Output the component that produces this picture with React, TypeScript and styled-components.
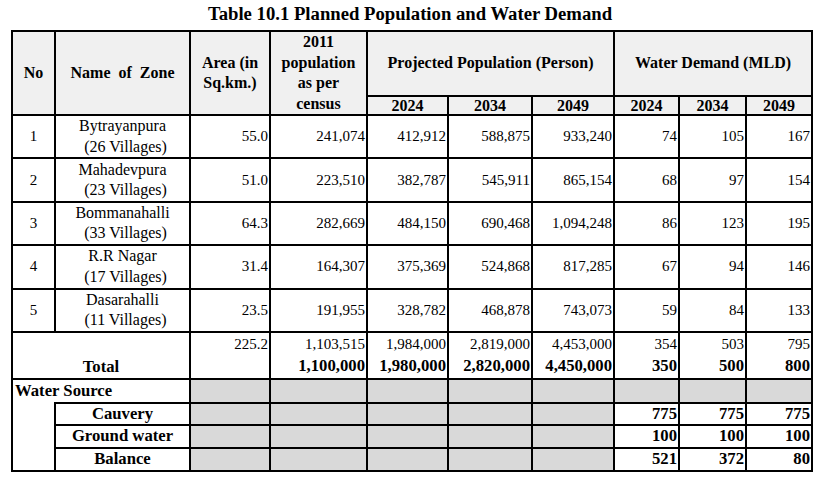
import styled, { createGlobalStyle } from 'styled-components';

const GlobalStyle = createGlobalStyle`
  body {
    margin: 0;
    background: #fff;
    color: #000;
    font-family: 'Liberation Serif', 'Times New Roman', serif;
  }
`;

type Zone = {
  no: number;
  name: string;
  villages: number;
  area: string;
  census: string;
  pop: string[];
  demand: string[];
};

const zones: Zone[] = [
  { no: 1, name: 'Bytrayanpura', villages: 26, area: '55.0', census: '241,074', pop: ['412,912', '588,875', '933,240'], demand: ['74', '105', '167'] },
  { no: 2, name: 'Mahadevpura', villages: 23, area: '51.0', census: '223,510', pop: ['382,787', '545,911', '865,154'], demand: ['68', '97', '154'] },
  { no: 3, name: 'Bommanahalli', villages: 33, area: '64.3', census: '282,669', pop: ['484,150', '690,468', '1,094,248'], demand: ['86', '123', '195'] },
  { no: 4, name: 'R.R Nagar', villages: 17, area: '31.4', census: '164,307', pop: ['375,369', '524,868', '817,285'], demand: ['67', '94', '146'] },
  { no: 5, name: 'Dasarahalli', villages: 11, area: '23.5', census: '191,955', pop: ['328,782', '468,878', '743,073'], demand: ['59', '84', '133'] },
];

const totals = [
  { raw: '1,103,515', round: '1,100,000' },
  { raw: '1,984,000', round: '1,980,000' },
  { raw: '2,819,000', round: '2,820,000' },
  { raw: '4,453,000', round: '4,450,000' },
  { raw: '354', round: '350' },
  { raw: '503', round: '500' },
  { raw: '795', round: '800' },
];

const sources = [
  { name: 'Cauvery', values: ['775', '775', '775'] },
  { name: 'Ground water', values: ['100', '100', '100'] },
  { name: 'Balance', values: ['521', '372', '80'] },
];

const colWidths = [43, 135, 80, 97, 81, 84, 82, 65, 67, 66];

function App() {
  return (
    <Page>
      <GlobalStyle />
      <Title>Table 10.1 Planned Population and Water Demand</Title>
      <Table>
        <colgroup>
          {colWidths.map((w, i) => (
            <col key={i} style={{ width: w }} />
          ))}
        </colgroup>
        <thead>
          <HeadRow $h={64}>
            <Th rowSpan={2}>No</Th>
            <Th rowSpan={2} $spaced>
              Name of Zone
            </Th>
            <Th rowSpan={2}>
              Area (in
              <br />
              Sq.km.)
            </Th>
            <Th rowSpan={2}>
              2011
              <br />
              population
              <br />
              as per
              <br />
              census
            </Th>
            <Th colSpan={3}>Projected Population (Person)</Th>
            <Th colSpan={3}>Water Demand (MLD)</Th>
          </HeadRow>
          <HeadRow $h={19}>
            {['2024', '2034', '2049', '2024', '2034', '2049'].map((y, i) => (
              <YearTh key={i}>{y}</YearTh>
            ))}
          </HeadRow>
        </thead>
        <tbody>
          {zones.map((z) => (
            <DataRow key={z.no}>
              <CenterCell>{z.no}</CenterCell>
              <NameCell>
                <span>{z.name}</span>
                <Villages>({z.villages} Villages)</Villages>
              </NameCell>
              <NumCell>{z.area}</NumCell>
              <NumCell>{z.census}</NumCell>
              {z.pop.map((p, i) => (
                <NumCell key={`p${i}`}>{p}</NumCell>
              ))}
              {z.demand.map((d, i) => (
                <NumCell key={`d${i}`}>{d}</NumCell>
              ))}
            </DataRow>
          ))}
          <TotalRow>
            <TotalLabel colSpan={2}>Total</TotalLabel>
            <TotalCell>
              <span>225.2</span>
              <b>&nbsp;</b>
            </TotalCell>
            {totals.map((t, i) => (
              <TotalCell key={i}>
                <span>{t.raw}</span>
                <b>{t.round}</b>
              </TotalCell>
            ))}
          </TotalRow>
          <SourceRow $h={24}>
            <SourceHead colSpan={2}>Water Source</SourceHead>
            {Array.from({ length: 8 }).map((_, i) => (
              <GreyCell key={i} />
            ))}
          </SourceRow>
          {sources.map((s, r) => (
            <SourceRow key={s.name} $h={r === 0 ? 22 : 23}>
              {r === 0 && <IndentCell rowSpan={3} />}
              <SourceName>{s.name}</SourceName>
              {Array.from({ length: 5 }).map((_, i) => (
                <GreyCell key={i} />
              ))}
              {s.values.map((v, i) => (
                <BoldNumCell key={i}>{v}</BoldNumCell>
              ))}
            </SourceRow>
          ))}
        </tbody>
      </Table>
    </Page>
  );
}

const Page = styled.div`
  width: 814px;
  height: 490px;
  padding-top: 3px;
  box-sizing: border-box;
`;

const Title = styled.h1`
  margin: 0 0 5px 6px;
  font-size: 18.7px;
  line-height: 22px;
  font-weight: 700;
  text-align: center;
`;

const Table = styled.table`
  margin-left: 11px;
  width: 800px;
  table-layout: fixed;
  border-collapse: collapse;
  font-size: 15px;

  td,
  th {
    border: 2px solid #000;
    padding: 0 1px;
    overflow: hidden;
    white-space: nowrap;
  }
`;

const HeadRow = styled.tr<{ $h: number }>`
  height: ${(p) => p.$h}px;
  background: #f0f0f0;
`;

const Th = styled.th<{ $spaced?: boolean }>`
  font-size: 16px;
  font-weight: 700;
  line-height: 20.5px;
  text-align: center;
  vertical-align: middle;
  word-spacing: ${(p) => (p.$spaced ? '4px' : 'normal')};
`;

const YearTh = styled(Th)`
  line-height: 17px;
`;

const DataRow = styled.tr`
  height: 43.4px;
`;

const CenterCell = styled.td`
  text-align: center;
  vertical-align: middle;
`;

const NameCell = styled.td`
  text-align: center;
  vertical-align: middle;
  font-size: 16px;
  line-height: 20.5px;

  > span {
    display: block;
  }
`;

const Villages = styled.span`
  padding-left: 6px;
`;

const NumCell = styled.td`
  text-align: right;
  vertical-align: middle;
`;

const TotalRow = styled.tr`
  height: 47px;
`;

const TotalLabel = styled.td`
  text-align: center;
  vertical-align: bottom;
  font-size: 16.7px;
  font-weight: 700;
  line-height: 22px;
`;

const TotalCell = styled.td`
  text-align: right;
  vertical-align: middle;
  line-height: 22px;

  > span,
  > b {
    display: block;
  }

  > b {
    font-size: 16.7px;
  }
`;

const SourceRow = styled.tr<{ $h: number }>`
  height: ${(p) => p.$h}px;
`;

const SourceHead = styled.td`
  font-size: 16.7px;
  font-weight: 700;
  text-align: left;
  line-height: 20px;
  && {
    border-bottom: none;
    padding-left: 2px;
  }
`;

const IndentCell = styled.td`
  && {
    border-top: none;
  }
`;

const SourceName = styled.td`
  font-size: 16.7px;
  font-weight: 700;
  text-align: center;
  line-height: 20px;
`;

const GreyCell = styled.td`
  background: #d9d9d9;
`;

const BoldNumCell = styled.td`
  font-size: 16.7px;
  font-weight: 700;
  text-align: right;
  line-height: 20px;
`;

export default App;
